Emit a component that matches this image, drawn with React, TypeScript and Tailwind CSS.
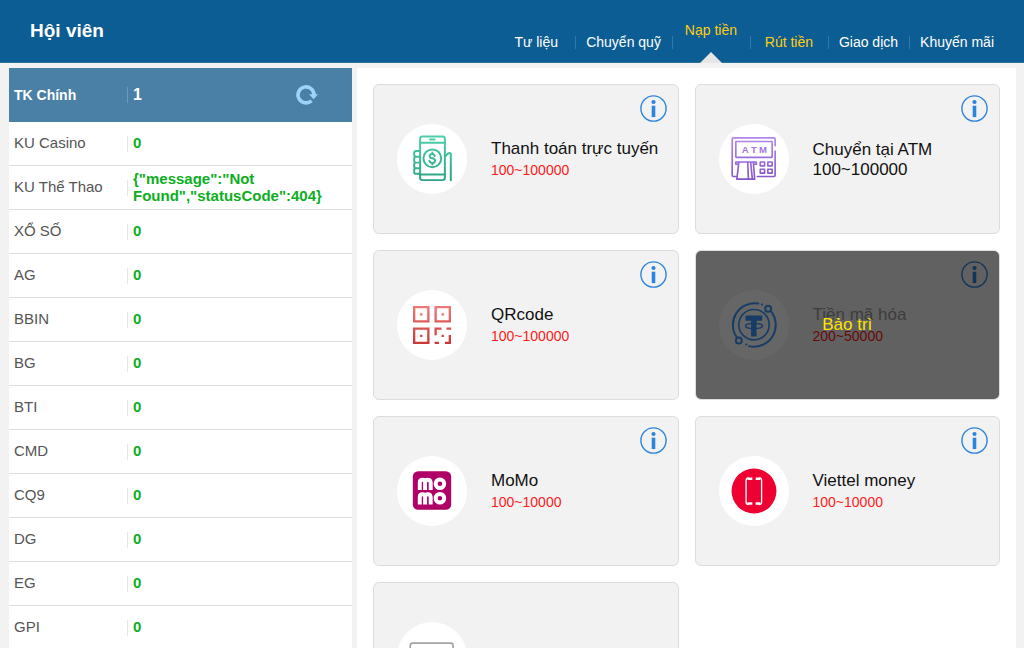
import type { ReactNode } from "react";

type Method = {
  name: string;
  range: string;
  plain?: boolean;
  closed?: boolean;
  icon: ReactNode;
};

const balances = [
  { label: "KU Casino", value: "0" },
  { label: "KU Thể Thao", value: '{"message":"Not Found","statusCode":404}' },
  { label: "XỔ SỐ", value: "0" },
  { label: "AG", value: "0" },
  { label: "BBIN", value: "0" },
  { label: "BG", value: "0" },
  { label: "BTI", value: "0" },
  { label: "CMD", value: "0" },
  { label: "CQ9", value: "0" },
  { label: "DG", value: "0" },
  { label: "EG", value: "0" },
  { label: "GPI", value: "0" },
];

const tabs = [
  { label: "Tư liệu" },
  { label: "Chuyển quỹ" },
  { label: "Nạp tiền", active: true },
  { label: "Rút tiền", highlight: true },
  { label: "Giao dịch" },
  { label: "Khuyến mãi" },
];

function PhoneIcon() {
  return (
    <svg viewBox="0 0 212 212" fill="none" stroke="url(#phone)" strokeWidth="6" strokeLinecap="round" strokeLinejoin="round">
      <defs>
        <linearGradient id="phone" gradientUnits="userSpaceOnUse" x1="0" y1="35" x2="0" y2="172">
          <stop offset="0" stopColor="#4fd0ad" />
          <stop offset="1" stopColor="#2ba383" />
        </linearGradient>
      </defs>
      <rect x="70" y="38" width="75" height="132" rx="7" />
      <path d="M70 57h75M70 153h75M100 47h14" />
      <circle cx="107" cy="104" r="27" />
      <path d="M70 82h-12q-6 0-6 6v5q0 6 6 6h12M58 99q-6 0-6 6v6q0 6 6 6h12M58 117q-6 0-6 6v5q0 6 6 6h12M58 134q-6 0-6 6v5q0 6 6 6h12" />
      <path d="M147 97q7-9 12-9q4 0 4 5v77" />
      <path d="M114 97q-1-6-7-6q-8 0-8 6q0 6 8 7q8 1 8 7q0 7-8 7q-8 0-9-7M107 86v5M107 118v5" />
    </svg>
  );
}

function AtmIcon() {
  return (
    <svg viewBox="0 0 212 212" fill="none" stroke="url(#atm)" strokeWidth="5" strokeLinecap="round" strokeLinejoin="round">
      <defs>
        <linearGradient id="atm" gradientUnits="userSpaceOnUse" x1="0" y1="40" x2="0" y2="170">
          <stop offset="0" stopColor="#b088ee" />
          <stop offset="1" stopColor="#8453c8" />
        </linearGradient>
      </defs>
      <path d="M170 66V46q0-4-4-4H44q-4 0-4 4v109q0 4 4 4h8M116 159h50q4 0 4-4V82" />
      <rect x="51" y="53" width="110" height="48" rx="2" />
      <g fill="#a175e2" stroke="none" textAnchor="middle" fontSize="29" className="font-['Liberation_Sans'] font-bold">
        <text x="79" y="88">A</text>
        <text x="106" y="88">T</text>
        <text x="133" y="88">M</text>
      </g>
      <path d="M59 122h-8v-7h62v7h-6M60 116l-6 51h54l-4-51M87 116l2 51M96 116l5 51" />
      <path d="M125 115h13v12h-13zM148 115h13v12h-13zM125 137h13v12h-13zM148 137h13v12h-13z" />
    </svg>
  );
}

function QrIcon() {
  return (
    <svg viewBox="0 0 212 212" fill="none" stroke="url(#qr)" strokeWidth="7">
      <defs>
        <linearGradient id="qr" gradientUnits="userSpaceOnUse" x1="0" y1="48" x2="0" y2="165">
          <stop offset="0" stopColor="#ee7a78" />
          <stop offset="1" stopColor="#c93636" />
        </linearGradient>
      </defs>
      <path d="M52 52h43v43h-43zM117 52h43v43h-43zM52 117h43v43h-43z" />
      <path d="M117 137v-20h18M150 117h14M160 136v24h-15M114 160h13" />
      <path d="M70 74h7M135 74h7M70 139h7M135 139h7" />
    </svg>
  );
}

function TetherIcon() {
  return (
    <svg viewBox="0 0 212 212" fill="none" stroke="#3a96ff" strokeWidth="6" strokeLinecap="round">
      <path d="M54 144A66 66 0 0 1 119 41M157 64A66 66 0 0 1 91 170" />
      <circle cx="149" cy="57" r="9" />
      <circle cx="60" cy="153" r="9" />
      <path d="M130 44h1M82 165h1" />
      <circle cx="106" cy="105" r="46" strokeWidth="5" />
      <path d="M82 79h47v12h-17v48h-13v-48h-17z" fill="#3a96ff" strokeLinejoin="round" strokeWidth="4" />
      <ellipse cx="106" cy="109" rx="26" ry="8" strokeWidth="4" />
    </svg>
  );
}

function MomoIcon() {
  return (
    <svg viewBox="0 0 212 212" fill="none" stroke="#fff" strokeWidth="12">
      <rect x="48" y="46" width="116" height="117" rx="16" fill="#af0068" stroke="none" />
      <path d="M69 103V80q0-8 8-8t8 8v23M85 80q0-8 8-8t9 8v23M69 147v-23q0-8 8-8t8 8v23M85 124q0-8 8-8t9 8v23" />
      <circle cx="130" cy="84" r="13" />
      <circle cx="130" cy="128" r="13" />
    </svg>
  );
}

function ViettelIcon() {
  return (
    <svg viewBox="0 0 212 212" fill="none" stroke="#fff" strokeWidth="4">
      <circle cx="106" cy="106" r="68" fill="#ee0033" stroke="none" />
      <path d="M90 66q-8 0-8 8v65q0 8 8 8M121 66q8 0 8 8v65q0 8-8 8" />
      <path d="M86 69h15M86 144h15M111 69h14M111 144h14" strokeWidth="8" />
    </svg>
  );
}

function CardIcon() {
  return (
    <svg viewBox="0 0 212 212" fill="none" stroke="#a3a3a3" strokeWidth="5">
      <rect x="40" y="64" width="130" height="84" rx="8" />
      <path d="M40 90h130" />
    </svg>
  );
}

const methods: Method[] = [
  { name: "Thanh toán trực tuyến", range: "100~100000", icon: <PhoneIcon /> },
  { name: "Chuyển tại ATM", range: "100~100000", plain: true, icon: <AtmIcon /> },
  { name: "QRcode", range: "100~100000", icon: <QrIcon /> },
  { name: "Tiền mã hóa", range: "200~50000", closed: true, icon: <TetherIcon /> },
  { name: "MoMo", range: "100~10000", icon: <MomoIcon /> },
  { name: "Viettel money", range: "100~10000", icon: <ViettelIcon /> },
  { name: "", range: "", icon: <CardIcon /> },
];

function MethodCard({ method }: { method: Method }) {
  return (
    <div className="relative flex items-center h-[150px] pl-[23px] gap-6 bg-[#f2f2f2] border border-[#dcdcdc] rounded-md">
      <div className="w-[70px] h-[70px] shrink-0 rounded-full bg-white">{method.icon}</div>

      <div className="pt-[2px] text-[17px] leading-5">
        <h2 className={method.closed ? "text-[#999]" : "text-[#111]"}>{method.name}</h2>
        <p className={method.plain ? "text-[#111]" : "text-sm leading-[22px] text-[#ff1a1a]"}>
          {method.range}
        </p>
      </div>

      {method.name && (
        <button aria-label={`Thông tin ${method.name}`} className="absolute top-[10px] right-[11px]">
          <svg width="27" height="27" viewBox="0 0 27 27" fill="#2b85dc">
            <circle cx="13.5" cy="13.5" r="12.6" fill="none" stroke="#2b85dc" strokeWidth="1.4" />
            <circle cx="13.5" cy="7" r="2.1" />
            <path d="M11.7 10.7h3.6v11.4h-3.6z" />
          </svg>
        </button>
      )}

      {method.closed && (
        <div className="absolute inset-0 flex items-center justify-center rounded-[5px] bg-black/60 text-[17px] leading-5 text-[#ffe400]">
          Bảo trì
        </div>
      )}
    </div>
  );
}

export default function App() {
  return (
    <div className="flex flex-col h-screen overflow-hidden bg-[#f2f2f2] font-['Liberation_Sans',Arial,sans-serif]">
      {/* Header */}
      <header className="flex justify-between h-[63px] shrink-0 pl-[30px] pr-[19px] bg-[#0c5d93] border-b border-[#2b7398] text-white">
        <h1 className="self-center text-[19px] leading-6 font-bold">Hội viên</h1>

        <nav className="flex text-sm">
          {tabs.map((tab, i) => (
            <a
              key={tab.label}
              href="#"
              className={`relative flex justify-center min-w-[78px] px-[11px] leading-5 ${
                tab.active ? "pt-5" : "pt-8"
              } ${tab.active || tab.highlight ? "text-[#fc1]" : ""}`}
            >
              {i > 0 && <span className="absolute left-0 top-9 h-[13px] w-px bg-[#2f78a8]" />}
              {tab.label}
              {tab.active && (
                <svg width="22" height="11" viewBox="0 0 22 11" className="absolute bottom-[-1px]">
                  <path d="M11 0L22 11H0z" fill="#e6e6e6" />
                </svg>
              )}
            </a>
          ))}
        </nav>
      </header>

      <div className="flex flex-1 min-h-0 gap-[5px] pt-[5px] pl-[9px] pr-2">
        {/* Balances */}
        <aside className="w-[343px] shrink-0 overflow-hidden bg-white">
          <table className="w-full table-fixed border-separate border-spacing-0 text-left text-[15px] leading-[17px]">
            <thead>
              <tr className="h-[54px] bg-[#4b80a6] text-white">
                <th scope="col" className="w-[118px] pl-[5px] text-sm">TK Chính</th>
                <th scope="col">
                  <div className="flex items-center justify-between pl-[5px] pr-[34px] border-l border-[#6d9abb] text-base leading-4">
                    1
                    <button aria-label="Làm mới" className="-my-1">
                      <svg width="22" height="20" viewBox="0 0 22 20" fill="none">
                        <path d="M15.5 15.7A8 8 0 1 1 18 10" stroke="#9bd3fa" strokeWidth="3.6" />
                        <path d="M13 9.2h9l-4.4 5z" fill="#9bd3fa" />
                      </svg>
                    </button>
                  </div>
                </th>
              </tr>
            </thead>
            <tbody>
              {balances.map((row) => (
                <tr key={row.label} className="h-11">
                  <th scope="row" className="pl-[5px] pb-[2px] border-b border-[#dedede] font-normal text-[#555]">
                    {row.label}
                  </th>
                  <td className="relative pl-[6px] pb-[2px] border-b border-[#dedede] font-bold text-[#0cae1e]">
                    <span className="absolute left-0 top-[14px] h-4 w-px bg-[#e6e6e6]" />
                    {row.value}
                  </td>
                </tr>
              ))}
            </tbody>
          </table>
        </aside>

        {/* Payment methods */}
        <main className="flex-1 min-w-0 overflow-hidden p-4 bg-white">
          <div className="grid grid-cols-2 gap-4">
            {methods.map((method, i) => (
              <MethodCard key={i} method={method} />
            ))}
          </div>
        </main>
      </div>
    </div>
  );
}
